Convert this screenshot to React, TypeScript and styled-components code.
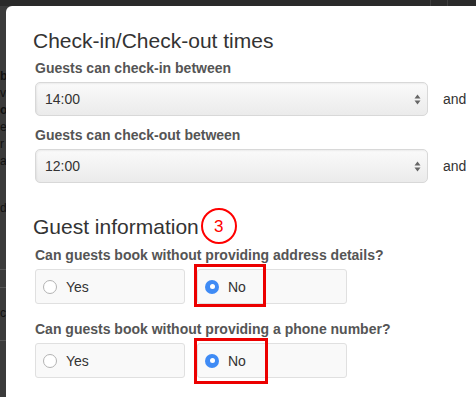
import styled, { createGlobalStyle } from "styled-components";

const GlobalStyle = createGlobalStyle`
  html, body {
    margin: 0;
    padding: 0;
    overflow: hidden;
    background: #3b3b3b;
    font-family: "Liberation Sans", Arial, sans-serif;
  }
`;

const Screen = styled.div`
  width: 476px;
  height: 397px;
  display: grid;
  grid-template-rows: 6px 1fr;
  overflow: hidden;
`;

const TopBar = styled.div`
  background: #2a2a2a;
  display: flex;
  justify-content: flex-end;
  padding-right: 12px;
`;

const NavItem = styled.div`
  width: 16px;
  border-left: 1px solid #3e3e3e;
`;

const Body = styled.div`
  display: grid;
  grid-template-columns: 6px 1fr;
  overflow: hidden;
`;

const Gutter = styled.div`
  overflow: hidden;
  padding-top: 62px;
  display: flex;
  flex-direction: column;
  color: #111;
  font-size: 12px;
  line-height: 17px;
  white-space: nowrap;
`;

const GutterLine = styled.div<{ $bold?: boolean; $gap?: number }>`
  font-weight: ${(p) => (p.$bold ? 700 : 400)};
  margin-top: ${(p) => p.$gap ?? 0}px;
`;

const GutterRule = styled.div<{ $gap: number }>`
  height: 1px;
  background: #555;
  margin-top: ${(p) => p.$gap}px;
`;

const Modal = styled.div`
  width: 640px;
  background: #fff;
  border-top-left-radius: 6px;
  padding: 23px 0 0 29px;
`;

const SectionTitle = styled.h2`
  margin: 0 0 0 -2px;
  font-size: 21px;
  line-height: 23px;
  font-weight: 400;
  color: #333;
  display: flex;
  align-items: center;
  gap: 2px;
`;

const StepBadge = styled.span`
  width: 32px;
  height: 32px;
  margin: -6px 0;
  border: 2px solid #f00;
  border-radius: 50%;
  color: #f00;
  font-size: 17px;
  display: flex;
  align-items: center;
  justify-content: center;
`;

const Group = styled.div<{ $gap: number }>`
  margin-top: ${(p) => p.$gap}px;
`;

const Label = styled.div`
  font-size: 14px;
  line-height: 20px;
  font-weight: 700;
  color: #555;
  margin-bottom: 4px;
`;

const TimeRow = styled.div`
  display: flex;
  align-items: center;
  gap: 15px;
`;

const Select = styled.div`
  position: relative;
  flex-shrink: 0;
  width: 393px;
  height: 34px;
  box-sizing: border-box;
  border: 1px solid #d8d8d8;
  border-radius: 5px;
  background: linear-gradient(#fafafa, #ebebeb);
  box-shadow: inset 1px 1px 2px rgba(0, 0, 0, 0.06);
  display: flex;
  align-items: center;
  padding: 0 9px;
  font-size: 14px;
  color: #333;
`;

const Arrows = styled.svg`
  position: absolute;
  right: 6px;
  top: 11px;
`;

const AndText = styled.span`
  flex-shrink: 0;
  font-size: 14px;
  color: #333;
`;

const Choices = styled.div`
  display: flex;
  gap: 12px;
`;

const Choice = styled.div`
  position: relative;
  width: 150px;
  height: 35px;
  box-sizing: border-box;
  border: 1px solid #e0e0e0;
  border-radius: 3px;
  background: #f9f9f9;
  display: flex;
  align-items: center;
  padding-left: 7px;
  gap: 9px;
  font-size: 14px;
  color: #333;
`;

const Radio = styled.span<{ $on?: boolean }>`
  width: 14px;
  height: 14px;
  box-sizing: border-box;
  border-radius: 50%;
  border: ${(p) => (p.$on ? "none" : "1px solid #b3b3b3")};
  background: ${(p) => (p.$on ? "#3f8bf5" : "#fff")};
  display: flex;
  align-items: center;
  justify-content: center;
  &::after {
    content: "";
    display: ${(p) => (p.$on ? "block" : "none")};
    width: 5px;
    height: 5px;
    border-radius: 50%;
    background: #fff;
  }
`;

const Highlight = styled.div<{ $w: number; $h: number }>`
  position: absolute;
  left: -4px;
  top: -6px;
  width: ${(p) => p.$w}px;
  height: ${(p) => p.$h}px;
  box-sizing: border-box;
  border: 3px solid #ec0000;
`;

function UpDown() {
  return (
    <Arrows width="7" height="11" viewBox="0 0 7 11">
      <path d="M3.5 0.5 L6.5 4.5 H0.5 Z" fill="#666" />
      <path d="M3.5 10.5 L6.5 6.5 H0.5 Z" fill="#666" />
    </Arrows>
  );
}

function TimeSelect({ value }: { value: string }) {
  return (
    <TimeRow>
      <Select>
        {value}
        <UpDown />
      </Select>
      <AndText>and</AndText>
    </TimeRow>
  );
}

function YesNo({ hw, hh }: { hw: number; hh: number }) {
  return (
    <Choices>
      <Choice>
        <Radio />
        Yes
      </Choice>
      <Choice>
        <Radio $on />
        No
        <Highlight $w={hw} $h={hh} />
      </Choice>
    </Choices>
  );
}

export default function App() {
  return (
    <>
      <GlobalStyle />
      <Screen>
        <TopBar>
          <NavItem />
          <NavItem />
        </TopBar>
        <Body>
          <Gutter>
            <GutterLine $bold>b</GutterLine>
            <GutterLine>v</GutterLine>
            <GutterLine $bold>o</GutterLine>
            <GutterLine>e</GutterLine>
            <GutterLine>r</GutterLine>
            <GutterLine>a</GutterLine>
            <GutterLine $gap={30}>d</GutterLine>
            <GutterRule $gap={52} />
            <GutterRule $gap={17} />
            <GutterLine $gap={17}>c</GutterLine>
            <GutterRule $gap={18} />
          </Gutter>
          <Modal>
            <SectionTitle>Check-in/Check-out times</SectionTitle>
            <Group $gap={6}>
              <Label>Guests can check-in between</Label>
              <TimeSelect value="14:00" />
            </Group>
            <Group $gap={9}>
              <Label>Guests can check-out between</Label>
              <TimeSelect value="12:00" />
            </Group>
            <Group $gap={31}>
              <SectionTitle>
                Guest information
                <StepBadge>3</StepBadge>
              </SectionTitle>
            </Group>
            <Group $gap={7}>
              <Label>Can guests book without providing address details?</Label>
              <YesNo hw={72} hh={43} />
            </Group>
            <Group $gap={15}>
              <Label>Can guests book without providing a phone number?</Label>
              <YesNo hw={74} hh={46} />
            </Group>
          </Modal>
        </Body>
      </Screen>
    </>
  );
}
